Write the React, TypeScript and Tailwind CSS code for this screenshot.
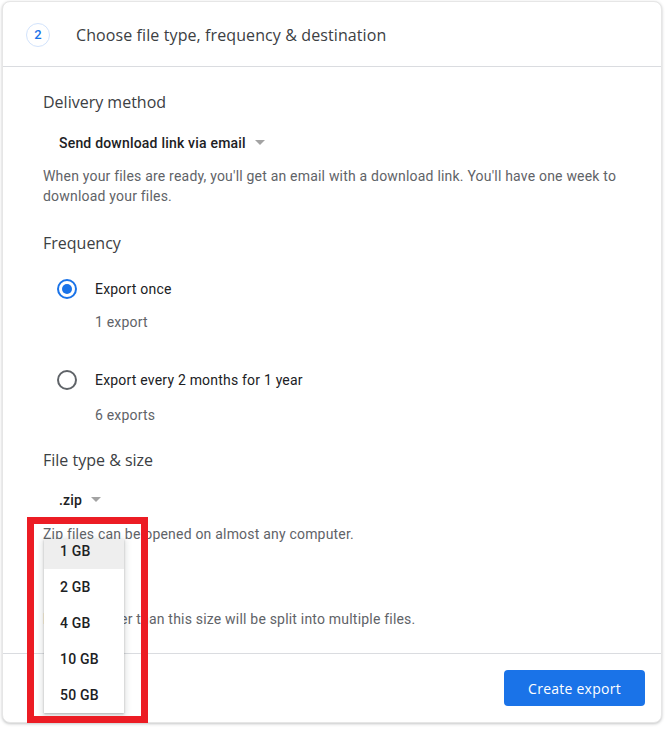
import React from 'react';

const sizes = ['1 GB', '2 GB', '4 GB', '10 GB', '50 GB'];

function Caret() {
  return <span className="ml-[9px] inline-block w-0 h-0 border-l-[5px] border-r-[5px] border-t-[5px] border-l-transparent border-r-transparent border-t-[#a3a3a3] translate-y-[-1px]" />;
}

function Radio({ checked, label, sub, mt, subMt }: { checked: boolean; label: string; sub: string; mt: string; subMt: string }) {
  return (
    <div className={mt}>
      <div className="flex items-center h-5">
        <span className={`ml-[14px] w-5 h-5 rounded-full border-2 flex items-center justify-center ${checked ? 'border-[#1a73e8]' : 'border-[#5f6368]'}`}>
          {checked && <span className="w-[10px] h-[10px] rounded-full bg-[#1a73e8]" />}
        </span>
        <span className="ml-[18px] text-[14px] leading-5 tracking-[0.2px] text-[#202124]">{label}</span>
      </div>
      <div className={`${subMt} ml-[52px] text-[14px] leading-5 tracking-[0.2px] text-[#5f6368]`}>{sub}</div>
    </div>
  );
}

export default function App() {
  return (
    <div className="relative w-[665px] h-[729px] bg-white overflow-hidden" style={{ fontFamily: 'Roboto, "Liberation Sans", sans-serif' }}>
      <div className="relative ml-[2px] mt-[1px] w-[660px] h-[722px] rounded-lg bg-white border border-[#e6e6e6] shadow-[0_1px_3px_rgba(60,64,67,0.3)]">
        {/* Header */}
        <div className="h-[65px] flex items-center border-b border-[#dadce0] pl-[23px] pt-[1px]">
          <span className="w-6 h-6 rounded-full border border-[#d2e3fc] flex items-center justify-center text-[13px] font-medium text-[#1a73e8]">2</span>
          <span className="ml-[26px] text-[16px] text-[#3c4043] tracking-[0.1px]" style={{ fontFamily: '"Open Sans", Roboto, sans-serif' }}>
            Choose file type, frequency &amp; destination
          </span>
        </div>

        {/* Body */}
        <div className="pl-[40px] pr-6 pt-[23px]">
          <div className="text-[16px] leading-6 text-[#3c4043]" style={{ fontFamily: '"Open Sans", Roboto, sans-serif' }}>Delivery method</div>
          <div className="mt-[19px] ml-[16px] flex items-center text-[14px] leading-5 tracking-[0.2px] font-medium text-[#202124]">
            Send download link via email<Caret />
          </div>
          <p className="mt-[13px] text-[14px] leading-5 tracking-[0.2px] text-[#5f6368]">
            When your files are ready, you'll get an email with a download link. You'll have one week to download your files.
          </p>

          <div className="mt-[25px] text-[16px] leading-6 text-[#3c4043]" style={{ fontFamily: '"Open Sans", Roboto, sans-serif' }}>Frequency</div>
          <Radio checked label="Export once" sub="1 export" mt="mt-[24px]" subMt="mt-[13px]" />
          <Radio checked={false} label="Export every 2 months for 1 year" sub="6 exports" mt="mt-[38px]" subMt="mt-[15px]" />

          <div className="mt-[23px] text-[16px] leading-6 text-[#3c4043]" style={{ fontFamily: '"Open Sans", Roboto, sans-serif' }}>File type &amp; size</div>
          <div className="mt-[18px] ml-[16px] flex items-center text-[14px] leading-5 tracking-[0.2px] font-medium text-[#202124]">
            .zip<Caret />
          </div>
          <p className="mt-[14px] text-[14px] leading-5 tracking-[0.2px] text-[#5f6368]">Zip files can be opened on almost any computer.</p>
          <div className="mt-[23px] ml-[16px] flex items-center text-[14px] leading-5 tracking-[0.2px] font-medium text-[#202124]">
            2 GB<Caret />
          </div>
          <p className="mt-[22px] text-[14px] leading-5 tracking-[0.2px] text-[#5f6368]">Exports larger than this size will be split into multiple files.</p>
        </div>

        {/* Footer */}
        <div className="absolute left-0 right-0 bottom-0 h-[69px] border-t border-[#dadce0] flex items-start justify-end pr-[16px] pt-[16px]">
          <button className="w-[141px] h-9 rounded bg-[#1a73e8] text-white text-[14px] font-medium tracking-[0.25px]" style={{ fontFamily: '"Open Sans", Roboto, sans-serif' }}>
            Create export
          </button>
        </div>

        {/* Size menu */}
        <div className="absolute left-[41px] top-[537px] w-[80px] h-[174px] bg-white overflow-hidden shadow-[0_2px_6px_2px_rgba(60,64,67,0.15),0_1px_2px_rgba(60,64,67,0.3)]">
          {sizes.map((s, i) => (
            <div key={s} className={`flex items-center pl-4 text-[14px] font-medium tracking-[0.2px] text-[#202124] ${i === 0 ? 'h-[30px] pb-[6px] bg-[#eeeeee]' : 'h-9'}`}>
              {s}
            </div>
          ))}
        </div>
      </div>

      {/* Annotation box */}
      <div className="absolute left-[27px] top-[517px] w-[121px] h-[206px] border-[7px] border-[#ec1c24]" />
    </div>
  );
}
